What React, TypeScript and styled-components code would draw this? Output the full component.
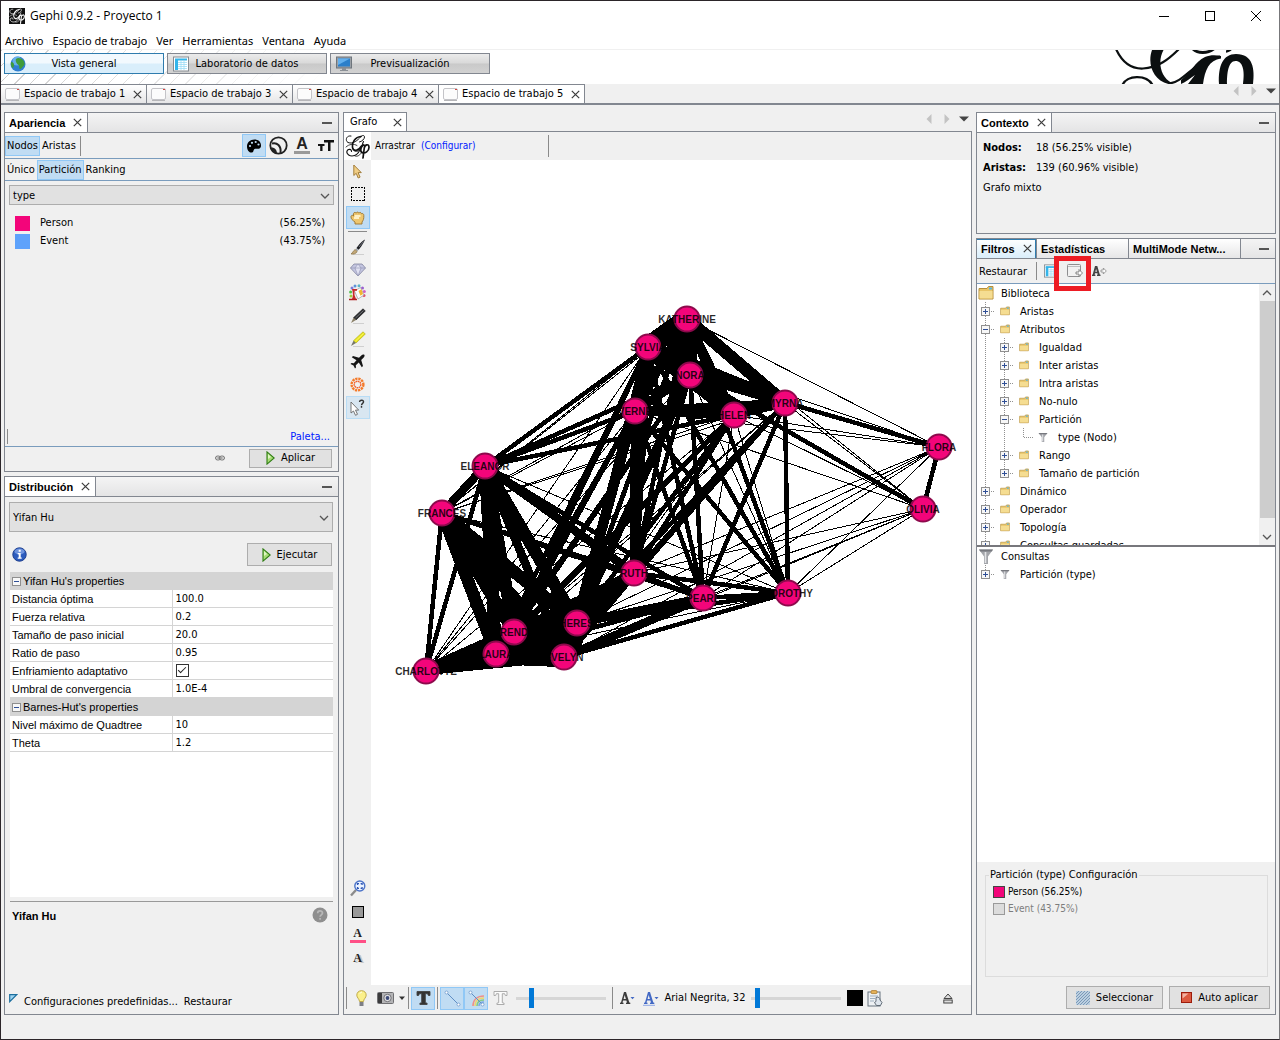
import React, { useState } from "react";
import styled, { createGlobalStyle, css } from "styled-components";

const UI = '"DejaVu Sans Condensed", "DejaVu Sans", "Noto Sans", sans-serif';
const ARIAL = '"Liberation Sans", Arial, sans-serif';
const MENU = '"Noto Sans", "Open Sans", sans-serif';
const LINE = "#828790";
const BLUE_LINE = "#7a9cbd";
const PINK = "#f3057a";

const Global = createGlobalStyle`
  *, *::before, *::after { box-sizing: border-box; }
  body { margin: 0; background: #f0f0f0; }
  button, input, select { font: inherit; color: inherit; margin: 0; }
  button { background: none; border: 0; padding: 0; cursor: default; }
  ul { list-style: none; margin: 0; padding: 0; }
  svg { display: block; flex: none; }
`;

/* ---------- window frame ---------- */
const Window = styled.div`
  display: flex;
  flex-direction: column;
  height: 100vh;
  min-height: 700px;
  border: 1px solid #2b2529;
  border-right-color: #77777a;
  background: #f0f0f0;
  color: #000;
  font: 11px/16px ${UI};
  white-space: nowrap;
`;
const TitleBar = styled.header`
  display: flex;
  align-items: center;
  height: 30px;
  padding: 0 0 0 8px;
  background: #fff;
  font: 12px/16px "Open Sans", ${MENU};
`;
const Title = styled.h1`
  flex: 1;
  margin: 0 0 0 5px;
  font: inherit;
`;
const WindowButton = styled.button`
  display: grid;
  place-items: center;
  width: 46px;
  height: 28px;
`;
const MenuBar = styled.nav`
  display: flex;
  gap: 9px;
  height: 19px;
  padding: 1px 4px 0;
  background: #fff;
  border-bottom: 1px solid #f0f0f0;
  font: 11px/17px ${MENU};
`;
const Banner = styled.div`
  display: flex;
  align-items: flex-start;
  gap: 3px;
  height: 34px;
  padding: 3px 24px 0 3px;
  background:
    linear-gradient(to right, rgba(255, 255, 255, 0) 0, #fff 330px),
    repeating-linear-gradient(135deg, #cfcfcf 0 1px, #fff 1px 11px);
`;
const Perspective = styled.button<{ $on?: boolean }>`
  display: grid;
  grid-template-columns: 16px 1fr 16px;
  align-items: center;
  width: 160px;
  height: 21px;
  padding: 0 5px;
  border: 1px solid ${(p) => (p.$on ? "#2f7cae" : LINE)};
  background: ${(p) =>
    p.$on
      ? "linear-gradient(#f2f9fe 48%, #d9eefb 52%)"
      : "linear-gradient(#ebebeb, #d9d9d9 48%, #c9c9c9 52%, #d2d2d2)"};
`;
const BannerLogo = styled.div`
  margin: -3px 0 0 auto;
`;
const WorkspaceTabs = styled.div`
  display: flex;
  align-items: stretch;
  height: 21px;
  border-bottom: 2px solid ${LINE};
`;
const WorkspaceTab = styled.div<{ $on?: boolean }>`
  display: flex;
  align-items: center;
  width: 146px;
  padding: 0 4px;
  border-top: 1px solid ${LINE};
  border-right: 1px solid ${LINE};
  background: ${(p) => (p.$on ? "#fff" : "linear-gradient(#fff, #e6e6e7)")};
`;
const TabLabel = styled.button`
  flex: 1;
  padding-left: 4px;
  text-align: left;
`;
const TabArrows = styled.div`
  display: flex;
  align-items: center;
  gap: 9px;
  height: 14px;
  margin-left: auto;
  padding-right: 3px;
`;
const Desk = styled.main`
  flex: 1;
  display: grid;
  grid-template-columns: 335px minmax(0, 1fr) 300px;
  gap: 4px;
  min-height: 0;
  padding: 7px 3px 24px;
`;
const Column = styled.div`
  display: flex;
  flex-direction: column;
  gap: 4px;
  min-width: 0;
  min-height: 0;
`;

/* ---------- docked panels ---------- */
const Panel = styled.section<{ $h?: number }>`
  display: flex;
  flex-direction: column;
  ${(p) => (p.$h ? css`flex: none; height: ${p.$h}px;` : css`flex: 1;`)}
  min-height: 0;
  border: 1px solid ${LINE};
`;
const PanelHead = styled.div`
  display: flex;
  height: 20px;
  border-bottom: 1px solid ${LINE};
  background: linear-gradient(#f4f4f4, #e4e4e5);
`;
const PanelTab = styled.div<{ $look?: "on" | "active" | "off"; $w?: number }>`
  display: flex;
  align-items: center;
  gap: 8px;
  ${(p) => p.$w && css`width: ${p.$w}px;`}
  padding: 0 5px 0 4px;
  border-right: 1px solid ${LINE};
  background: ${(p) =>
    p.$look === "active"
      ? "linear-gradient(#fff, #d9eefb)"
      : p.$look === "off"
      ? "linear-gradient(#fff, #e6e6e7)"
      : "#fff"};
  ${(p) => p.$look === "active" && css`box-shadow: inset 0 1px #2f7cae, inset -1px 0 #2f7cae;`}
`;
const PanelTitle = styled.h2`
  margin: 0;
  font: bold 11px/16px ${ARIAL};
`;
const Minimize = styled.button`
  width: 22px;
  margin-left: auto;
  padding: 0 6px;
  &::before {
    content: "";
    display: block;
    height: 2px;
    background: #555;
  }
`;
const ToolRow = styled.div<{ $h: number }>`
  display: flex;
  align-items: center;
  height: ${(p) => p.$h}px;
  border-bottom: 1px solid ${BLUE_LINE};
`;
const Toggle = styled.button<{ $on?: boolean }>`
  height: 20px;
  padding: 1px 1px 0;
  border: 1px solid ${(p) => (p.$on ? "#90c8f6" : "transparent")};
  background: ${(p) => (p.$on ? "#c0dcf3" : "transparent")};
`;
const IconButton = styled.button<{ $on?: boolean; $soft?: boolean; $w?: number; $h?: number }>`
  display: grid;
  place-items: center;
  flex: none;
  width: ${(p) => p.$w ?? 24}px;
  height: ${(p) => p.$h ?? 23}px;
  border: 1px solid ${(p) => (p.$on ? "#90c8f6" : p.$soft ? "#b8dcf5" : "transparent")};
  background: ${(p) => (p.$on ? "#c0dcf3" : p.$soft ? "#d8e6f1" : "transparent")};
`;
const Divider = styled.span<{ $h?: number }>`
  flex: none;
  width: 1px;
  height: ${(p) => p.$h ?? 22}px;
  margin: 0 2px;
  background: #8a8a8a;
`;
const Push = styled.span`
  flex: 1;
`;
const ComboBox = styled.div<{ $h: number }>`
  position: relative;
  height: ${(p) => p.$h}px;
  select {
    appearance: none;
    width: 100%;
    height: 100%;
    padding: 1px 20px 0 3px;
    border: 1px solid #adadad;
    border-radius: 0;
    background: #e1e1e1;
  }
  svg {
    position: absolute;
    right: 4px;
    top: calc(50% - 2px);
    pointer-events: none;
  }
`;
const PushButton = styled.button<{ $w: number; $h: number }>`
  display: flex;
  align-items: center;
  justify-content: center;
  gap: 6px;
  width: ${(p) => p.$w}px;
  height: ${(p) => p.$h}px;
  border: 1px solid #adadad;
  background: #e1e1e1;
`;

/* ---------- appearance ---------- */
const AppearanceBody = styled.div`
  flex: 1;
  display: flex;
  flex-direction: column;
  padding: 4px 4px 0;
`;
const Partition = styled.li`
  display: flex;
  align-items: center;
  height: 18px;
  padding: 0 9px 0 6px;
`;
const Swatch = styled.span<{ $c: string }>`
  width: 15px;
  height: 15px;
  margin-right: 10px;
  background: ${(p) => p.$c};
`;
const PartitionList = styled.ul`
  flex: 1;
  padding-top: 9px;
`;
const PaletteRow = styled.div`
  display: flex;
  justify-content: flex-end;
  height: 18px;
  padding-right: 8px;
  border-bottom: 1px solid ${BLUE_LINE};
  background: linear-gradient(#8a8a8a, #8a8a8a) 2px 0 / 1px 15px no-repeat;
`;
const Link = styled.a`
  color: #0020ff;
  text-decoration: none;
`;
const ApplyRow = styled.div`
  display: flex;
  align-items: center;
  justify-content: flex-end;
  gap: 24px;
  height: 24px;
  padding: 0 6px 2px;
`;

/* ---------- layout panel ---------- */
const LayoutBody = styled.div`
  flex: 1;
  display: flex;
  flex-direction: column;
  min-height: 0;
  padding: 5px 5px 4px 4px;
`;
const RunRow = styled.div`
  display: flex;
  align-items: center;
  justify-content: space-between;
  padding: 11px 1px 6px 3px;
`;
const Properties = styled.div`
  flex: 1;
  min-height: 0;
  overflow: hidden;
  background: #fff;
  margin-left: 1px;
`;
const Table = styled.table`
  width: 100%;
  border-collapse: separate;
  border-spacing: 0;
  table-layout: fixed;
  font: 11px/14px ${ARIAL};
  th, td {
    height: 18px;
    padding: 1px 2px 0;
    border-bottom: 1px solid #d4d4d4;
    text-align: left;
    font-weight: normal;
  }
  th { width: 50%; }
  td {
    padding: 0 3px;
    border-left: 1px solid #d4d4d4;
    font: 11px/14px ${UI};
  }
`;
const GroupCell = styled.th`
  background: #d4d4d4;
`;
const GroupLabel = styled.button`
  display: flex;
  align-items: center;
  gap: 2px;
`;
const AdaptiveCheck = styled.input`
  appearance: none;
  display: block;
  width: 13px;
  height: 13px;
  border: 1px solid #333;
  background: #fff;
  &:checked::after {
    content: "";
    display: block;
    width: 8px;
    height: 4px;
    margin: 2px 0 0 1px;
    border: solid #222;
    border-width: 0 0 1px 1px;
    transform: rotate(-45deg);
  }
`;
const Description = styled.div`
  display: flex;
  align-items: flex-start;
  justify-content: space-between;
  height: 93px;
  margin: 4px 0 0 1px;
  padding: 5px 5px 0 2px;
  border-top: 1px solid #999;
  strong { font: bold 11px/18px ${ARIAL}; }
`;
const PresetRow = styled.div`
  display: flex;
  gap: 6px;
`;

/* ---------- graph ---------- */
const GraphPanel = styled.section`
  flex: 1;
  display: flex;
  flex-direction: column;
  min-height: 0;
`;
const GraphTabs = styled.div`
  display: flex;
  height: 19px;
`;
const GraphTab = styled.div`
  display: flex;
  align-items: center;
  justify-content: space-between;
  width: 64px;
  padding: 0 4px 0 6px;
  border: 1px solid ${LINE};
  border-bottom: 0;
  background: #fff;
`;
const GraphFrame = styled.div`
  flex: 1;
  display: grid;
  grid-template: 28px minmax(0, 1fr) 29px / 27px minmax(0, 1fr);
  border: 1px solid ${LINE};
`;
const LogoCell = styled.div`
  display: grid;
  place-items: center;
  background: #fff;
`;
const GraphHint = styled.div`
  display: flex;
  align-items: center;
  gap: 6px;
  padding-left: 4px;
  font: 10px/16px ${UI};
`;
const HintRegion = styled.div`
  display: flex;
  gap: 6px;
  width: 165px;
`;
const ToolColumn = styled.div`
  display: flex;
  flex-direction: column;
  align-items: center;
  padding: 0 0 16px;
`;
const ToolSeparator = styled.hr`
  width: 19px;
  margin: 2px 0 3px;
  border: 0;
  border-top: 1px solid #8a8a8a;
`;
const Canvas = styled.div`
  background: #fff;
  min-width: 0;
  min-height: 0;
  svg { width: 100%; height: 100%; }
`;
const BottomBar = styled.div`
  grid-column: 1 / -1;
  display: flex;
  align-items: center;
  padding: 0 11px 3px 0;
`;
const Slider = styled.input`
  appearance: none;
  flex: none;
  width: 90px;
  height: 22px;
  margin: 0 4px;
  background: linear-gradient(#d6d6d6, #d6d6d6) 0 50% / 100% 3px no-repeat;
  &::-webkit-slider-thumb {
    appearance: none;
    width: 5px;
    height: 20px;
    background: #0078d7;
  }
`;
const FontButton = styled.button`
  width: 84px;
  flex: none;
`;
const ColorChip = styled.span<{ $c: string; $edge?: string; $w: number }>`
  width: ${(p) => p.$w}px;
  height: ${(p) => p.$w}px;
  background: ${(p) => p.$c};
  border: 1px solid ${(p) => p.$edge ?? p.$c};
`;

/* ---------- context + filters ---------- */
const ContextBody = styled.dl`
  display: grid;
  grid-template-columns: 53px 1fr;
  margin: 0;
  padding: 5px 6px;
  line-height: 20px;
  dt { font-weight: bold; }
  dd { margin: 0; }
  dd:last-child { grid-column: 1 / -1; }
`;
const FilterTools = styled(ToolRow)`
  position: relative;
  padding-left: 2px;
`;
const ToolLabel = styled.button`
  width: 53px;
  margin-right: 2px;
  padding-top: 1px;
  text-align: left;
`;
const Callout = styled.span`
  position: absolute;
  left: 77px;
  top: -3px;
  width: 37px;
  height: 35px;
  border: 5px solid #ed1c24;
  z-index: 1;
  pointer-events: none;
`;
const TreeBox = styled.div`
  display: flex;
  height: 263px;
  overflow: hidden;
  border-bottom: 2px solid #77777c;
  background: #fff;
`;
const Tree = styled.div`
  flex: 1;
  min-width: 0;
`;
const QueryBox = styled.div`
  flex: 1;
  background: #fff;
`;
const Root = styled.div`
  display: flex;
  align-items: center;
  height: 18px;
  padding-left: 1px;
`;
const Branch = styled.ul<{ $nested?: boolean; $closed?: boolean }>`
  padding-left: ${(p) => (p.$nested ? 19 : 0)}px;
  background: repeating-linear-gradient(#909090 0 1px, transparent 1px 2px)
    ${(p) => (p.$nested ? 27 : 8)}px 0 / 1px ${(p) => (p.$closed ? "calc(100% - 9px)" : "100%")} no-repeat;
`;
const TreeRow = styled.div`
  display: flex;
  align-items: center;
  height: 18px;
  padding-left: 4px;
`;
const Twig = styled.span<{ $leaf?: boolean }>`
  width: ${(p) => (p.$leaf ? 11 : 5)}px;
  height: 1px;
  margin: 0 ${(p) => (p.$leaf ? 4 : 5)}px 0 ${(p) => (p.$leaf ? 4 : 0)}px;
  background: repeating-linear-gradient(to right, transparent 0 1px, #909090 1px 2px);
`;
const NodeText = styled.span<{ $root?: boolean }>`
  margin-left: ${(p) => (p.$root ? 7 : 10)}px;
  padding-top: 2px;
`;
const ScrollBar = styled.div`
  display: flex;
  flex-direction: column;
  align-items: center;
  width: 16px;
  background: #f0f0f0;
`;
const ScrollButton = styled.button`
  display: grid;
  place-items: center;
  width: 16px;
  height: 17px;
`;
const ScrollThumb = styled.div`
  flex: 1;
  width: 15px;
  margin-bottom: 10px;
  background: #cdcdcd;
`;
const Config = styled.div`
  padding: 5px 5px 5px 8px;
`;
const ConfigGroup = styled.fieldset`
  height: 110px;
  margin: 0 2px 9px 0;
  padding: 0 7px;
  border: 1px solid #dcdcdc;
  legend { padding: 0 1px; margin-left: -4px; }
`;
const CheckRow = styled.label<{ $dim?: boolean }>`
  display: flex;
  align-items: center;
  gap: 3px;
  height: 17px;
  font: 10px/16px ${UI};
  color: ${(p) => (p.$dim ? "#7d7d7d" : "#000")};
`;
const ColorCheck = styled.input<{ $c: string; $edge: string }>`
  appearance: none;
  width: 12px;
  height: 12px;
  border: 1px solid ${(p) => p.$edge};
  background: ${(p) => p.$c};
`;
const Actions = styled.div`
  display: flex;
  justify-content: flex-end;
  gap: 6px;
`;

/* ---------- icons ---------- */
const Close = () => (
  <svg width="9" height="9" viewBox="0 0 9 9"><path d="M.8.8l7.4 7.4M8.2.8L.8 8.2" stroke="#3c3c3c" strokeWidth="1.2" /></svg>
);
const Chevron = ({ up }: { up?: boolean }) => (
  <svg width="10" height="6" viewBox="0 0 10 6"><path d={up ? "M1 5l4-4 4 4" : "M1 1l4 4 4-4"} fill="none" stroke="#555" strokeWidth={1.3} /></svg>
);
const Play = () => (
  <svg width="9" height="14" viewBox="0 0 9 14"><path d="M1 .9v12.2L8.2 7z" fill="#a6dc74" stroke="#2e7d12" strokeWidth="1.1" /><path d="M2 3v5l3-2z" fill="#dff5c4" /></svg>
);
const Arrows = () => (
  <TabArrows>
    <svg width="24" height="12" viewBox="0 0 24 12" aria-hidden="true">
      <path d="M5.500 1v10L.5 6z M18.500 1v10l5-5z" fill="#c3c3c3" />
    </svg>
    <svg width="10" height="6" viewBox="0 0 10 6"><path d="M0 .5h10L5 5.500z" fill="#444" /></svg>
  </TabArrows>
);
const GlyphLogo = ({ size, dark }: { size: number; dark?: boolean }) => (
  <svg width={size} height={size} viewBox="0 0 25 25">
    {dark && <rect width="25" height="25" fill="#111" />}
    <g fill="none" stroke={dark ? "#fff" : "#111"} strokeLinecap="round">
      <path d="M6 2C1 1 0 7 3 8.500 8 10.500 13 6 15.500 3c1.500-2 4-2 4 0s-2.500 4.500-5 5" strokeWidth="1" />
      <path d="M16 2.500C10 3 6.500 9 7.500 13.500c1 4.500 6 3.500 9-1.500" strokeWidth="1.600" />
      <path d="M18.500 7.500C16.500 12 15 20 9.500 21.500 5 23 1 20 2 17c1-2.500 5-2 4.500.5" strokeWidth="1.100" />
      <path d="M1 13c3-3 8-3.500 11-1.500M9.500 17c3 2 6-1 9-6.500" strokeWidth=".8" />
      <path d="M19 11c-3 .5-4.500 6-2 7.500 3 1.500 7-1.500 7-5 0-4.500-4.500-3-4.800 1L18 24" strokeWidth="1.700" />
      <path d="M10 22c3 1 5-1 7-4" strokeWidth=".8" />
    </g>
  </svg>
);
const BigLogo = () => (
  <svg width="140" height="34" viewBox="0 0 140 34">
    <g fill="none" stroke="#0b0f10">
      <path d="M1-1c6 13 15 20 27 19.500C43 18 54 9 64-1" strokeWidth="2.200" />
      <path d="M7.500 35c4-10 24-11 30 0" strokeWidth="2.400" />
      <path d="M54 33.500c16-1 26-25 51-27" strokeWidth="2" />
      <path d="M77-2c5 6 16 6 23 0" strokeWidth="2.800" />
      <path d="M111 1.500c2 0 3-1 5-2" strokeWidth="2.500" />
    </g>
    <path d="M37 0h11.500C43 10 44 26 57 33l-1 1.500C38 32 32 14 37 0z" fill="#0b0f10" />
    <path d="M66 30c10-8 14-18 24-23 5-2 10-2 16-1v2.500C94 10 90 20 88 34H73l7-9c-5 3-9 7-14 9z" fill="#0b0f10" />
    <path d="M104 34c-1-18 4-30 17-30 17 0 19 15 17 30h-10c2-13 0-23-7.500-23C113 11 112 24 112 34z" fill="#0b0f10" />
  </svg>
);
const Globe = () => (
  <svg width="16" height="16" viewBox="0 0 16 16"><circle cx="8" cy="8" r="7.500" fill="#2f7fd0" /><circle cx="7" cy="5" r="4.500" fill="#68b0ea" /><path d="M6 3c2-2 5-1 7 1s2 5 .5 6-2 3-3.500 3 0-3-1.500-4S5 5 6 3z" fill="#3f9c3a" /><path d="M1 6c2 0 3 1 3 3s-1 3-1.500 3S.5 9 1 6z" fill="#3f9c3a" /></svg>
);
const Grid = ({ s = 16 }: { s?: number }) => (
  <svg width={s} height={s} viewBox="0 0 16 16"><rect x=".5" y="1" width="15" height="14" fill="#fff" stroke="#868c92" /><rect x="2" y="3" width="3" height="11" fill="#34b5ea" /><rect x="2" y="2.500" width="12" height="2" fill="#34b5ea" /><path d="M5 6.500h9M5 8.500h9M5 10.500h9M5 12.500h9M8 5v9M11 5v9" stroke="#9ddcf5" strokeWidth=".8" /></svg>
);
const Monitor = () => (
  <svg width="16" height="16" viewBox="0 0 16 16"><rect x=".5" y="1" width="15" height="11" fill="#9aa0a6" stroke="#6e757c" /><rect x="2" y="2.500" width="12" height="8" fill="#2b7fca" /><path d="M2 2.500h12L2 9z" fill="#63b0ee" /><path d="M6 12h4v2h2v1H4v-1h2z" fill="#8b9096" /></svg>
);
const SheetIcon = () => (
  <svg width="15" height="13" viewBox="0 0 15 13"><rect x=".5" y=".5" width="14" height="11" rx="1.500" fill="#fcfcfc" stroke="#c4c4c8" /><path d="M1 12.500h13" stroke="#b5b5b8" /><path d="M12 1.500h2" stroke="#d64541" /></svg>
);
const Palette = () => (
  <svg width="16" height="16" viewBox="0 0 16 16"><path d="M8.500 1.500C4 1.500 1 4.500 1 8.500S3.500 15 6 14.500c2-.5 1-2.500 2.500-3.500s3.500.5 5-.5 1.500-2 1.500-3C15 3.500 12 1.500 8.500 1.500z" fill="#000" /><g fill="#c0dcf3"><circle cx="4" cy="8" r="1.100" /><circle cx="6" cy="4.800" r="1.100" /><circle cx="9.700" cy="4" r="1.100" /><circle cx="12.500" cy="6.500" r="1.100" /></g></svg>
);
const Rings = () => (
  <svg width="19" height="19" viewBox="0 0 19 19"><circle cx="9.500" cy="9.500" r="8.200" fill="none" stroke="#222" strokeWidth="1.800" /><path d="M3 7.500c5-1.500 9.500 2.500 8.500 9.500" fill="none" stroke="#222" strokeWidth="2" /><path d="M1.500 11.500c4-.5 6.500 2 6.500 6.300A8.300 8.300 0 0 1 1.500 11.500z" fill="#222" /></svg>
);
const Letter = styled.span<{ $size: number; $bar?: string; $serif?: boolean; $ghost?: boolean }>`
  width: ${(p) => (p.$bar ? 16 : 12)}px;
  font: bold ${(p) => p.$size}px/14px ${(p) => (p.$serif ? '"Liberation Serif", serif' : ARIAL)};
  color: #222;
  text-align: center;
  ${(p) => p.$bar && css`border-bottom: 3px solid ${p.$bar};`}
  ${(p) => p.$ghost && css`text-shadow: 2px 1px #c4c4c4;`}
`;
const SizeGlyph = () => (
  <svg width="16" height="13" viewBox="0 0 16 13"><path d="M6 1h10v2.500h-3.500V12h-2.500V3.500H6zM0 5h6.500v2H4.500v5H2.200V7H0z" fill="#111" /></svg>
);
const Chain = () => (
  <svg width="10" height="6" viewBox="0 0 10 6"><g fill="#d8d8d8" stroke="#777"><rect x=".5" y="1" width="5" height="4" rx="2" /><rect x="4.500" y="1" width="5" height="4" rx="2" /></g><path d="M2.500 3h5" stroke="#777" /></svg>
);
const Info = () => (
  <svg width="15" height="15" viewBox="0 0 15 15"><circle cx="7.500" cy="7.500" r="6.700" fill="#2c5cbe" stroke="#1d3f8f" /><ellipse cx="7.500" cy="4.500" rx="5" ry="3" fill="#6d93de" /><path d="M6.700 2.800h2v2h-2zM5.700 6h3v4.500h1v1.300h-4v-1.300h1V7.200h-1z" fill="#fff" /></svg>
);
const Help = () => (
  <svg width="16" height="16" viewBox="0 0 16 16"><circle cx="8" cy="8" r="7.500" fill="#8f8f8f" /><path d="M5.700 6.200C5.700 3.200 10.500 3.300 10.500 6c0 1.800-2.400 1.900-2.400 3.800M8.100 11v1.700" fill="none" stroke="#b9b9b9" strokeWidth="1.700" /></svg>
);
const Corner = () => (
  <svg width="9" height="9" viewBox="0 0 9 9"><path d="M.7.7h7L.7 7.700z" fill="#9fd5f2" stroke="#1d6f9e" strokeWidth="1.200" /></svg>
);
const Box = ({ open }: { open?: boolean }) => (
  <svg width="9" height="9" viewBox="0 0 9 9" shapeRendering="crispEdges"><rect x=".5" y=".5" width="8" height="8" fill="#f7f7f7" stroke="#8f8f8f" /><path d={open ? "M2 4.500h5" : "M2 4.500h5M4.500 2v5"} stroke="#2f4f96" /></svg>
);
const Folder = ({ s = 10 }: { s?: number }) => (
  <svg width={s} height={s} viewBox="0 0 16 16"><path d="M1 3.500h8l1.500-2H15V14H1z" fill="#e9c568" stroke="#b58e3a" /><path d="M1.500 6h13v7.500h-13z" fill="#f5dd92" /><path d="M11 2.500h3v2h-3z" fill="#59b4e0" /></svg>
);
const Funnel = ({ s = 10 }: { s?: number }) => (
  <svg width={s} height={s} viewBox="0 0 16 16"><path d="M1 1.500h14l-5 7V16H6V8.500z" fill="#a3a5aa" /><path d="M1 1.500h14l-1.200 2H2.200z" fill="#77797f" /><path d="M7.500 4v11" stroke="#e4e5e8" strokeWidth="1.600" /></svg>
);
const Hatch = () => (
  <svg width="14" height="14" viewBox="0 0 14 14"><rect width="14" height="14" fill="#bccfe0" /><path d="M0 3l3-3M0 6l6-6M0 9l9-9M0 12l12-12M1 14L14 1M4 14L14 4M7 14l7-7M10 14l4-4" stroke="#7393b3" strokeWidth=".9" /></svg>
);
const Stop = () => (
  <svg width="11" height="11" viewBox="0 0 11 11"><rect x=".5" y=".5" width="10" height="10" fill="#dc5a40" stroke="#9c1c0c" /><path d="M1.500 1.500h6l-6 5z" fill="#f2b5a5" /></svg>
);
const Arrow = () => (
  <svg width="9" height="15" viewBox="0 0 9 15"><path d="M.8 1v10.500l2.400-2.200 2 4.700 1.900-.9-2-4.500h3.200z" fill="#f1ce86" stroke="#9b742f" strokeWidth=".9" /></svg>
);
const Marquee = () => (
  <svg width="15" height="15" viewBox="0 0 15 15" shapeRendering="crispEdges"><rect x="1.500" y=".5" width="13" height="13" fill="none" stroke="#000" strokeDasharray="2 1" /></svg>
);
const Hand = () => (
  <svg width="15" height="14" viewBox="0 0 15 14"><path d="M1 5.500c.5-1.500 1.800-1.500 2.500-.5V2.500c.5-1.500 2.300-1.300 2.700-.3.500-1.600 2.300-1.300 2.700 0 .6-1.200 2.200-1 2.600.5C12.500 2 14 3 13.800 4.500c.2 3-.5 5-1.800 6.500v2H5v-2C3 9.500.7 8 1 5.500z" fill="#eec66e" stroke="#9b742f" strokeWidth=".9" /><path d="M4.500 5h6M4 7h5" stroke="#fff0c4" strokeWidth="1.800" /></svg>
);
const Brush = () => (
  <svg width="16" height="16" viewBox="0 0 16 16"><path d="M3 15.500h11" stroke="#cfcfcf" /><path d="M15 .5c-2 .5-7 6-8.500 8.500l2 1.700C10.500 9 14 3.500 15 .5z" fill="#1d1f24" /><path d="M13.500 2.500L9 8" stroke="#8a8d94" strokeWidth=".8" /><path d="M6.300 9.300l2 1.700-1 1.300-2-1.700z" fill="#9aa0a8" /><path d="M5 10.500l2.200 2C6.500 14.500 3.500 15.500 1 15c1.500-1 2-3 4-4.500z" fill="#c2a878" stroke="#7d6639" strokeWidth=".6" /></svg>
);
const Pencil = ({ body, tip, edge }: { body: string; tip: string; edge: string }) => (
  <svg width="16" height="16" viewBox="0 0 16 16"><path d="M3 15.500h11" stroke="#cfcfcf" /><path d="M13 .8L15.300 3 6 12l-2.500-2.300z" fill={body} stroke={edge} strokeWidth=".6" /><path d="M13.500 2.500L5.500 10" stroke="#fff" strokeOpacity=".45" strokeWidth=".8" /><path d="M3.500 9.700L6 12l-5 3z" fill={tip} /></svg>
);
const Diamond = () => (
  <svg width="16" height="14" viewBox="0 0 16 14"><path d="M4 1h8l3.500 4L8 13 .5 5z" fill="#c3c5e0" stroke="#83859f" strokeWidth=".8" /><path d="M.5 5h15M5 5l3 8 3-8-3-4z" fill="#e0e1f2" stroke="#8f91b0" strokeWidth=".6" /></svg>
);
const Bucket = () => (
  <svg width="17" height="17" viewBox="0 0 17 17"><g><circle cx="3" cy="4" r="1.500" fill="#7a7ad8" /><circle cx="6" cy="2" r="1.500" fill="#5d93d8" /><circle cx="10" cy="1.800" r="1.500" fill="#5bb4c8" /><circle cx="13.500" cy="4" r="1.500" fill="#9a5fd0" /><circle cx="15.300" cy="7.500" r="1.500" fill="#d05fc8" /><circle cx="15" cy="11.500" r="1.500" fill="#e0506a" /><circle cx="1.600" cy="8" r="1.500" fill="#4fc04a" /><circle cx="2" cy="12" r="1.500" fill="#9ed03a" /></g><path d="M5.500 7l6-3.500L15 11l-6 4z" fill="#fdfdfd" stroke="#9a9a9a" strokeWidth=".7" /><path d="M9.500 7l3-1.800L14 10l-2.500 1.800z" fill="#f2b632" /><path d="M3 5h5v1.800H5.500V11l1.500 4H3c1.500-3 1-6 0-10z" fill="#c92a2a" /><path d="M0 15.500h8" stroke="#b11f1f" strokeWidth="1.500" /></svg>
);
const Plane = () => (
  <svg width="15" height="15" viewBox="0 0 15 15"><path d="M14.300.8c-1-.7-2.200 0-3 .8L9 3.800 3 2 1.800 3.200l4.700 3-2.700 3L1.500 9l-1 1 3 1.500 1.500 3 1-1-.2-2.300 3-2.700 3 4.700L13 12l-1.800-6 2.300-2.300c.8-.8 1.500-2 .8-2.900z" fill="#151515" /></svg>
);
const Flower = () => (
  <svg width="15" height="15" viewBox="0 0 15 15"><g fill="none" stroke="#f47a2a"><circle cx="7.500" cy="7.500" r="5.900" strokeWidth="2.400" strokeDasharray="2.300 .8" /><circle cx="7.500" cy="7.500" r="3.300" stroke="#f2602a" strokeWidth="1.400" strokeDasharray="1.700 .5" /></g></svg>
);
const HelpArrow = () => (
  <svg width="15" height="17" viewBox="0 0 15 17"><path d="M1 3v11l2.500-2 2 4.300 2-1-2-4.200h3.200z" fill="#fff" stroke="#666" strokeWidth=".9" /><path d="M9.500 3c.3-2.500 4.500-2.200 4 .2-.2 1.200-2 1.300-2 3M11.500 7v1.700" fill="none" stroke="#333" strokeWidth="1.400" /></svg>
);
const Lens = () => (
  <svg width="16" height="17" viewBox="0 0 16 17"><path d="M1 15.500l5-5.500" stroke="#8b8b8b" strokeWidth="2.400" /><circle cx="9.800" cy="6" r="5" fill="#eaf2ff" stroke="#4d74c8" strokeWidth="1.400" /><path d="M7.500 5V3.700h1.500M10.600 3.700h1.500V5M12.100 7v1.300h-1.500M9 8.300H7.500V7" fill="none" stroke="#2c55b5" strokeWidth="1.200" /></svg>
);
const Bulb = () => (
  <svg width="11" height="17" viewBox="0 0 11 17"><path d="M5.500.7C2.500.7.8 2.800.8 5.200S3.400 9 3.500 11.500h4C7.600 9 10.200 7.600 10.200 5.200S8.500.7 5.500.7z" fill="#fbf08c" stroke="#b9a23c" strokeWidth=".9" /><path d="M3.500 12h4v4h-4z" fill="#7d7f86" /><path d="M4 3.500c.3-1 1-1.300 2-1.300" stroke="#fff" fill="none" /></svg>
);
const Camera = () => (
  <svg width="17" height="14" viewBox="0 0 17 14"><rect x=".5" y="1.500" width="16" height="11" rx="1" fill="#b4b4b6" stroke="#6f6f72" /><rect x="1" y="2" width="4" height="10" fill="#3b3b3d" /><circle cx="10.500" cy="7" r="3.700" fill="#e3e3e5" stroke="#707075" /><circle cx="10.500" cy="7" r="1.900" fill="#3c4a78" /></svg>
);
const Caret = () => (
  <svg width="6" height="4" viewBox="0 0 6 4"><path d="M0 .5h6L3 4z" fill="#333" /></svg>
);
const SlabT = ({ ghost }: { ghost?: boolean }) => (
  <svg width="15" height="16" viewBox="0 0 15 16"><path d="M1 1.500h13v4h-1.600l-.8-1.800H9.300v9l1.800.5v1.300H3.900v-1.300l1.800-.5v-9H3.400l-.8 1.800H1z" fill={ghost ? "#fbfbfb" : "#333"} stroke={ghost ? "#a4a4a4" : "#444"} strokeWidth=".9" /></svg>
);
const EdgeLine = ({ rainbow }: { rainbow?: boolean }) => (
  <svg width="17" height="17" viewBox="0 0 17 17">
    {rainbow && <g fill="none" strokeWidth="1.600"><path d="M5 16c0-6 4-10 11-10" stroke="#ef8f8a" /><path d="M7 16c0-5 3-8 9-8" stroke="#f0d66c" /><path d="M9 16c0-4 2-6 7-6" stroke="#86c986" /><path d="M11 16c0-3 1-4 5-4" stroke="#7ba9e4" /></g>}
    <path d="M3 3l11 11" stroke="#5f8ec4" /><circle cx="2.500" cy="2.500" r="1.500" fill="#fff" stroke="#6d99cc" strokeWidth=".8" /><circle cx="14.500" cy="14.500" r="1.500" fill="#fff" stroke="#6d99cc" strokeWidth=".8" />
  </svg>
);
const FontGlyph = ({ blue }: { blue?: boolean }) => (
  <svg width="16" height="15" viewBox="0 0 16 15"><path d="M5 1h2l3.300 10.500 1 .3V13H7v-1.200l1-.3-.6-2H4.100l-.6 2 1 .3V13H1v-1.200l1-.3zM5.700 4L4.600 8h2.300z" fill={blue ? "#4369c4" : "#3c3c3c"} fillRule="evenodd" />{blue && <path d="M0 14.300h12" stroke="#8fa8e6" />}<path d="M11.500 6h4l-2 2.200z" fill="#4369c4" /></svg>
);
const Clipboard = () => (
  <svg width="16" height="17" viewBox="0 0 16 17"><rect x="1" y="2" width="12" height="14" fill="#eef1f4" stroke="#66727e" /><rect x="4" y=".6" width="6" height="3" rx="1" fill="#e6b35a" stroke="#a8772a" strokeWidth=".8" /><path d="M3 6h8M3 8.500h5M3 11h4" stroke="#9fb0c0" /><path d="M9 7.500c2-1 4 0 4 2.500l2 2.500-1.500 3H9.500l-2-3 1.500-1z" fill="#dfe6ee" stroke="#55606b" strokeWidth=".9" /></svg>
);
const Eject = () => (
  <svg width="10" height="11" viewBox="0 0 10 11"><path d="M5 1l4 4.500H1z" fill="#ddd" stroke="#444" /><rect x=".8" y="7" width="8.400" height="3" fill="#ddd" stroke="#444" /></svg>
);
const ExportSheet = () => (
  <svg width="16" height="14" viewBox="0 0 16 14"><rect x=".5" y=".5" width="13" height="12" rx="1" fill="#f1f1f1" stroke="#8e8e90" /><path d="M1 2.500h12" stroke="#bdbdbf" /><path d="M9 8h3V5.500l3.500 3.500-3.500 3.500V10H9z" fill="#fff" stroke="#777" strokeWidth=".9" /></svg>
);
const ExportLetter = () => (
  <svg width="15" height="12" viewBox="0 0 15 12"><path d="M3 1h2.300l2.500 8.500.7.300V11H5v-1.200l.7-.3-.3-1.300H3l-.4 1.300.8.300V11H0V9.800l.7-.3zM4.100 4l-.8 2.700H5z" fill="#444" fillRule="evenodd" /><path d="M9 5h2.300V3l3 3-3 3V7H9z" fill="#fff" stroke="#888" strokeWidth=".8" /></svg>
);

/* ---------- network data ---------- */
type Person = { name: string; x: number; y: number; events: number[] };
const PEOPLE: Person[] = [
  { name: "EVELYN", x: 193, y: 497, events: [1, 2, 3, 4, 5, 6, 8, 9] },
  { name: "LAURA", x: 125, y: 494, events: [1, 2, 3, 5, 6, 7, 8] },
  { name: "THERESA", x: 206, y: 463, events: [2, 3, 4, 5, 6, 7, 8, 9] },
  { name: "BRENDA", x: 143, y: 472, events: [1, 3, 4, 5, 6, 7, 8] },
  { name: "CHARLOTTE", x: 55, y: 511, events: [3, 4, 5, 7] },
  { name: "FRANCES", x: 71, y: 353, events: [3, 5, 6, 8] },
  { name: "ELEANOR", x: 114, y: 306, events: [5, 6, 7, 8] },
  { name: "PEARL", x: 332, y: 438, events: [6, 8, 9] },
  { name: "RUTH", x: 263, y: 413, events: [5, 7, 8, 9] },
  { name: "VERNE", x: 264, y: 251, events: [7, 8, 9, 12] },
  { name: "MYRNA", x: 414, y: 243, events: [8, 9, 10, 12] },
  { name: "KATHERINE", x: 316, y: 159, events: [8, 9, 10, 12, 13, 14] },
  { name: "SYLVIA", x: 277, y: 187, events: [7, 8, 9, 10, 12, 13, 14] },
  { name: "NORA", x: 319, y: 215, events: [6, 7, 9, 10, 11, 12, 13, 14] },
  { name: "HELEN", x: 363, y: 255, events: [7, 8, 10, 11, 12] },
  { name: "DOROTHY", x: 417, y: 433, events: [8, 9] },
  { name: "OLIVIA", x: 552, y: 349, events: [9, 11] },
  { name: "FLORA", x: 568, y: 287, events: [9, 11] },
];
const EDGES = PEOPLE.flatMap((a, i) =>
  PEOPLE.slice(i + 1).map((b) => ({ a, b, shared: a.events.filter((e) => b.events.includes(e)).length }))
).filter((e) => e.shared > 0);

const Network = () => (
  <svg viewBox="0 0 600 825" role="img" aria-label="Grafo">
    <g stroke="#000" shapeRendering="crispEdges">
      {EDGES.map(({ a, b, shared }) => (
        <line key={a.name + b.name} x1={a.x} y1={a.y} x2={b.x} y2={b.y} strokeWidth={shared === 1 ? 1 : shared * 4 - 3.5} />
      ))}
    </g>
    {PEOPLE.map((p) => (
      <circle key={p.name} cx={p.x} cy={p.y} r="12.500" fill={PINK} stroke="#8d0a4c" strokeWidth="2" />
    ))}
    <g fill="#000" fillOpacity=".85" fontFamily="Liberation Sans, Arial, sans-serif" fontWeight="bold" fontSize="10" textAnchor="middle">
      {PEOPLE.map((p) => (
        <text key={p.name} x={p.x} y={p.y + 4}>{p.name}</text>
      ))}
    </g>
  </svg>
);

/* ---------- tree ---------- */
type Item = { label: string; open?: boolean; leaf?: boolean; items?: Item[] };
const LIBRARY: Item[] = [
  { label: "Aristas" },
  {
    label: "Atributos",
    open: true,
    items: [
      { label: "Igualdad" },
      { label: "Inter aristas" },
      { label: "Intra aristas" },
      { label: "No-nulo" },
      { label: "Partición", open: true, items: [{ label: "type (Nodo)", leaf: true }] },
      { label: "Rango" },
      { label: "Tamaño de partición" },
    ],
  },
  { label: "Dinámico" },
  { label: "Operador" },
  { label: "Topología" },
  { label: "Consultas guardadas" },
];
const TreeNode = ({ item, filter }: { item: Item; filter?: boolean }) => (
  <li>
    <TreeRow>
      {item.leaf ? <Twig $leaf /> : <><button aria-label={item.label}><Box open={item.open} /></button><Twig /></>}
      {item.leaf || filter ? <Funnel /> : <Folder />}
      <NodeText>{item.label}</NodeText>
    </TreeRow>
    {item.items && (
      <Branch $nested $closed>
        {item.items.map((i) => <TreeNode key={i.label} item={i} />)}
      </Branch>
    )}
  </li>
);

/* ---------- properties ---------- */
const PROPERTY_GROUPS: { name: string; rows: [string, string | null][] }[] = [
  {
    name: "Yifan Hu's properties",
    rows: [
      ["Distancia óptima", "100.0"],
      ["Fuerza relativa", "0.2"],
      ["Tamaño de paso inicial", "20.0"],
      ["Ratio de paso", "0.95"],
      ["Enfriamiento adaptativo", null],
      ["Umbral de convergencia", "1.0E-4"],
    ],
  },
  { name: "Barnes-Hut's properties", rows: [["Nivel máximo de Quadtree", "10"], ["Theta", "1.2"]] },
];

const Header = ({ title }: { title: string }) => (
  <PanelHead>
    <PanelTab><PanelTitle>{title}</PanelTitle><button aria-label={"Cerrar " + title}><Close /></button></PanelTab>
    <Minimize aria-label={"Minimizar " + title} />
  </PanelHead>
);

export default function App() {
  const [workspace, setWorkspace] = useState(5);
  const [adaptive, setAdaptive] = useState(true);
  return (
    <Window>
      <Global />
      <TitleBar>
        <GlyphLogo size={16} dark />
        <Title>Gephi 0.9.2 - Proyecto 1</Title>
        <WindowButton aria-label="Minimizar"><svg width="10" height="10"><path d="M0 5.500h10" stroke="#000" /></svg></WindowButton>
        <WindowButton aria-label="Maximizar"><svg width="10" height="10"><rect x=".5" y=".5" width="9" height="9" fill="none" stroke="#000" /></svg></WindowButton>
        <WindowButton aria-label="Cerrar"><svg width="10" height="10"><path d="M0 0l10 10M10 0L0 10" stroke="#000" /></svg></WindowButton>
      </TitleBar>
      <MenuBar>
        {["Archivo", "Espacio de trabajo", "Ver", "Herramientas", "Ventana", "Ayuda"].map((m) => <button key={m}>{m}</button>)}
      </MenuBar>
      <Banner>
        <Perspective $on><Globe />Vista general</Perspective>
        <Perspective><Grid />Laboratorio de datos</Perspective>
        <Perspective><Monitor />Previsualización</Perspective>
        <BannerLogo><BigLogo /></BannerLogo>
      </Banner>
      <WorkspaceTabs>
        {[1, 3, 4, 5].map((n) => (
          <WorkspaceTab key={n} $on={n === workspace}>
            <SheetIcon />
            <TabLabel onClick={() => setWorkspace(n)}>Espacio de trabajo {n}</TabLabel>
            <button aria-label={"Cerrar espacio " + n}><Close /></button>
          </WorkspaceTab>
        ))}
        <Arrows />
      </WorkspaceTabs>
      <Desk>
        <Column>
          <Panel $h={360}>
            <Header title="Apariencia" />
            <ToolRow $h={26}>
              <Toggle $on>Nodos</Toggle>
              <Toggle>Aristas</Toggle>
              <Divider $h={20} />
              <Push />
              <IconButton $on aria-label="Color"><Palette /></IconButton>
              <IconButton aria-label="Tamaño"><Rings /></IconButton>
              <IconButton aria-label="Color de etiqueta"><Letter $size={16} $bar="#999">A</Letter></IconButton>
              <IconButton aria-label="Tamaño de etiqueta"><SizeGlyph /></IconButton>
            </ToolRow>
            <ToolRow $h={22}>
              <Toggle>Único</Toggle>
              <Toggle $on>Partición</Toggle>
              <Toggle>Ranking</Toggle>
            </ToolRow>
            <AppearanceBody>
              <ComboBox $h={20}><select aria-label="Atributo"><option>type</option></select><Chevron /></ComboBox>
              <PartitionList>
                <Partition><Swatch $c={PINK} />Person<Push />(56.25%)</Partition>
                <Partition><Swatch $c="#5ea2fb" />Event<Push />(43.75%)</Partition>
              </PartitionList>
            </AppearanceBody>
            <PaletteRow><Link href="#paleta">Paleta...</Link></PaletteRow>
            <ApplyRow>
              <button aria-label="Enlazar"><Chain /></button>
              <PushButton $w={83} $h={19}><Play />Aplicar</PushButton>
            </ApplyRow>
          </Panel>
          <Panel>
            <Header title="Distribución" />
            <LayoutBody>
              <ComboBox $h={30}><select aria-label="Distribución"><option>Yifan Hu</option></select><Chevron /></ComboBox>
              <RunRow>
                <Info />
                <PushButton $w={85} $h={23}><Play />Ejecutar</PushButton>
              </RunRow>
              <Properties>
                <Table>
                  <colgroup><col /><col /></colgroup>
                  <tbody>
                    {PROPERTY_GROUPS.map((g) => (
                      <React.Fragment key={g.name}>
                        <tr><GroupCell colSpan={2}><GroupLabel><Box open />{g.name}</GroupLabel></GroupCell></tr>
                        {g.rows.map(([name, value]) => (
                          <tr key={name}>
                            <th scope="row">{name}</th>
                            <td>{value ?? <AdaptiveCheck type="checkbox" aria-label={name} checked={adaptive} onChange={(e) => setAdaptive(e.target.checked)} />}</td>
                          </tr>
                        ))}
                      </React.Fragment>
                    ))}
                  </tbody>
                </Table>
              </Properties>
              <Description><strong>Yifan Hu</strong><Help /></Description>
              <PresetRow><Corner /><button>Configuraciones predefinidas...</button><button>Restaurar</button></PresetRow>
            </LayoutBody>
          </Panel>
        </Column>

        <GraphPanel>
          <GraphTabs>
            <GraphTab>Grafo<button aria-label="Cerrar Grafo"><Close /></button></GraphTab>
            <Arrows />
          </GraphTabs>
          <GraphFrame>
            <LogoCell><GlyphLogo size={25} /></LogoCell>
            <GraphHint>
              <HintRegion>Arrastrar<Link href="#configurar">(Configurar)</Link></HintRegion>
              <Divider />
            </GraphHint>
            <ToolColumn>
              <IconButton aria-label="Selección directa"><Arrow /></IconButton>
              <IconButton aria-label="Selección rectangular"><Marquee /></IconButton>
              <IconButton $on aria-label="Arrastrar"><Hand /></IconButton>
              <ToolSeparator />
              <IconButton aria-label="Pintor"><Brush /></IconButton>
              <IconButton aria-label="Tamaño"><Diamond /></IconButton>
              <IconButton aria-label="Brocha"><Bucket /></IconButton>
              <IconButton aria-label="Lápiz de nodos"><Pencil body="#2a2c30" edge="#111" tip="#8a8068" /></IconButton>
              <IconButton aria-label="Lápiz de aristas"><Pencil body="#ece81a" edge="#a8a410" tip="#77786a" /></IconButton>
              <IconButton aria-label="Camino más corto"><Plane /></IconButton>
              <IconButton aria-label="Mapa de calor"><Flower /></IconButton>
              <IconButton $soft aria-label="Editar"><HelpArrow /></IconButton>
              <Push />
              <IconButton aria-label="Centrar"><Lens /></IconButton>
              <IconButton aria-label="Restablecer colores"><ColorChip $w={12} $c="#999" $edge="#000" /></IconButton>
              <IconButton aria-label="Color de etiquetas"><Letter $size={12} $serif $bar="#ff4f86">A</Letter></IconButton>
              <IconButton aria-label="Visibilidad de etiquetas"><Letter $size={12} $serif $ghost>A</Letter></IconButton>
            </ToolColumn>
            <Canvas><Network /></Canvas>
            <BottomBar>
              <Divider />
              <IconButton aria-label="Fondo"><Bulb /></IconButton>
              <IconButton aria-label="Captura"><Camera /></IconButton>
              <IconButton $w={9} aria-label="Opciones de captura"><Caret /></IconButton>
              <Divider />
              <IconButton $on aria-label="Etiquetas de nodos"><SlabT /></IconButton>
              <Divider />
              <IconButton $on aria-label="Mostrar aristas"><EdgeLine /></IconButton>
              <IconButton $on aria-label="Color de aristas"><EdgeLine rainbow /></IconButton>
              <IconButton aria-label="Etiquetas de aristas"><SlabT ghost /></IconButton>
              <Slider type="range" aria-label="Grosor de aristas" defaultValue={15} />
              <Divider />
              <IconButton aria-label="Modo de tamaño"><FontGlyph /></IconButton>
              <IconButton aria-label="Modo de color"><FontGlyph blue /></IconButton>
              <FontButton>Arial Negrita, 32</FontButton>
              <Slider type="range" aria-label="Tamaño de fuente" defaultValue={5} />
              <IconButton $w={20} aria-label="Color de fuente"><ColorChip $w={16} $c="#000" /></IconButton>
              <IconButton $w={20} aria-label="Atributos"><Clipboard /></IconButton>
              <Push />
              <IconButton aria-label="Expandir"><Eject /></IconButton>
            </BottomBar>
          </GraphFrame>
        </GraphPanel>

        <Column>
          <Panel $h={122}>
            <Header title="Contexto" />
            <ContextBody>
              <dt>Nodos:</dt><dd>18 (56.25% visible)</dd>
              <dt>Aristas:</dt><dd>139 (60.96% visible)</dd>
              <dd>Grafo mixto</dd>
            </ContextBody>
          </Panel>
          <Panel>
            <PanelHead>
              <PanelTab $look="active" $w={60}><PanelTitle>Filtros</PanelTitle><button aria-label="Cerrar Filtros"><Close /></button></PanelTab>
              <PanelTab $look="off" $w={92}><PanelTitle>Estadísticas</PanelTitle></PanelTab>
              <PanelTab $look="off" $w={112}><PanelTitle>MultiMode Netw...</PanelTitle></PanelTab>
              <Minimize aria-label="Minimizar Filtros" />
            </PanelHead>
            <FilterTools $h={25}>
              <ToolLabel>Restaurar</ToolLabel>
              <Divider $h={18} />
              <IconButton aria-label="Exportar columna"><Grid s={14} /></IconButton>
              <IconButton aria-label="Exportar a espacio de trabajo"><ExportSheet /></IconButton>
              <IconButton aria-label="Exportar etiquetas"><ExportLetter /></IconButton>
              <Callout />
            </FilterTools>
            <TreeBox>
              <Tree>
                <Root><Folder s={16} /><NodeText $root>Biblioteca</NodeText></Root>
                <Branch>{LIBRARY.map((i) => <TreeNode key={i.label} item={i} />)}</Branch>
              </Tree>
              <ScrollBar>
                <ScrollButton aria-label="Subir"><Chevron up /></ScrollButton>
                <ScrollThumb />
                <ScrollButton aria-label="Bajar"><Chevron /></ScrollButton>
              </ScrollBar>
            </TreeBox>
            <QueryBox>
              <Root><Funnel s={16} /><NodeText $root>Consultas</NodeText></Root>
              <Branch $closed><TreeNode item={{ label: "Partición (type)" }} filter /></Branch>
            </QueryBox>
            <Config>
              <ConfigGroup>
                <legend>Partición (type) Configuración</legend>
                <CheckRow><ColorCheck type="checkbox" defaultChecked $c={PINK} $edge="#444" />Person (56.25%)</CheckRow>
                <CheckRow $dim><ColorCheck type="checkbox" $c="#dcdcdc" $edge="#9a9a9a" />Event (43.75%)</CheckRow>
              </ConfigGroup>
              <Actions>
                <PushButton $w={97} $h={23}><Hatch />Seleccionar</PushButton>
                <PushButton $w={101} $h={23}><Stop />Auto aplicar</PushButton>
              </Actions>
            </Config>
          </Panel>
        </Column>
      </Desk>
    </Window>
  );
}
